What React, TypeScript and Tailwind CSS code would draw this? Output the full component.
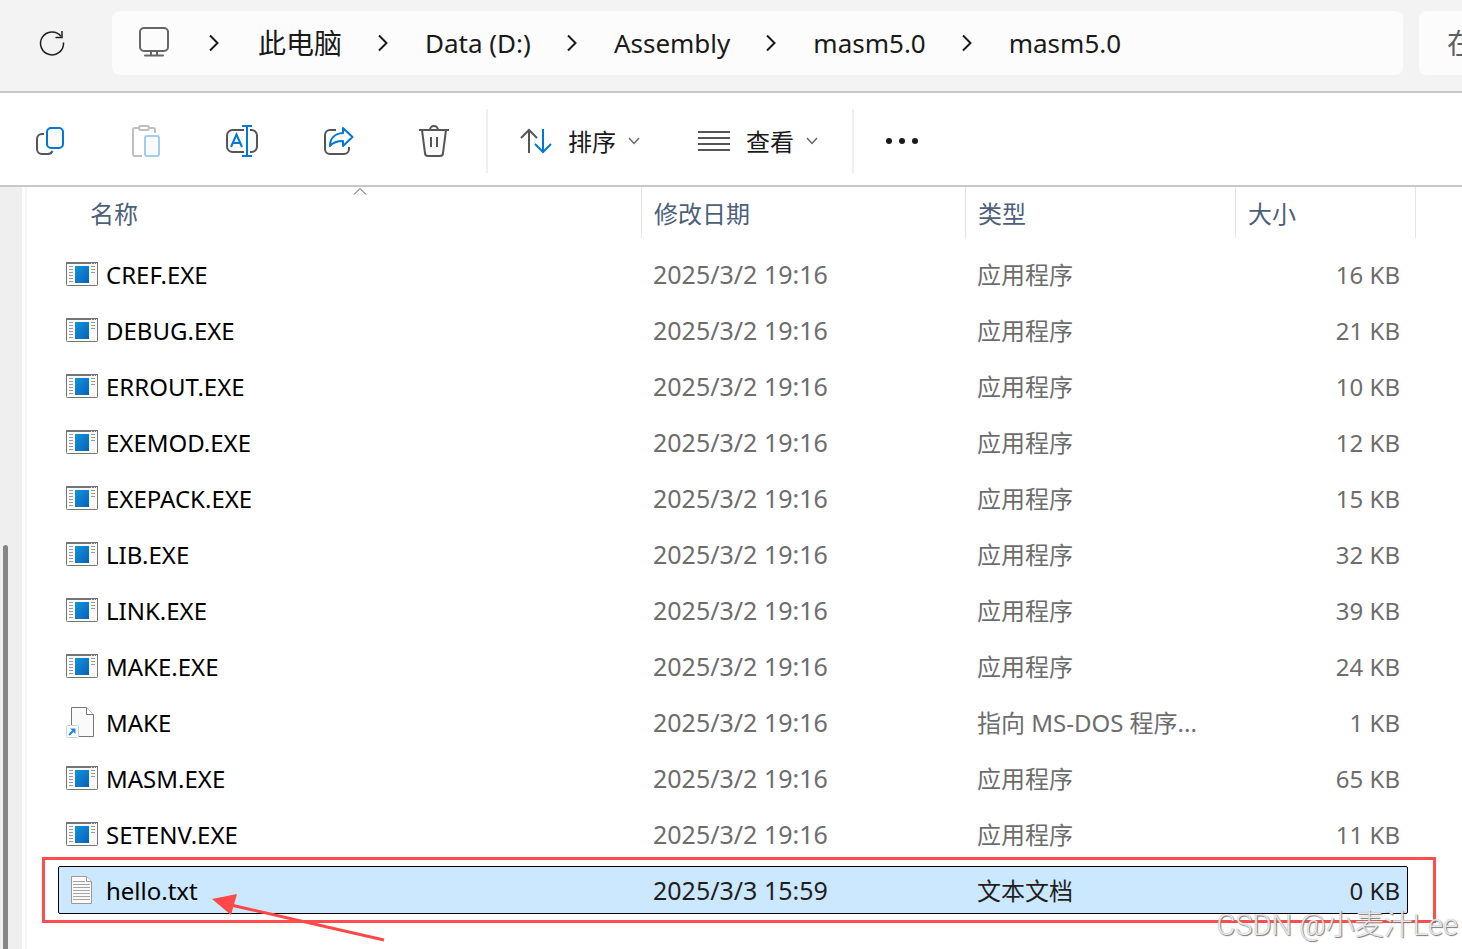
import type { ReactNode } from "react";

type FileKind = "exe" | "shortcut" | "text";

interface FileItem {
  name: string;
  date: string;
  type: string;
  size: string;
  kind: FileKind;
  selected?: boolean;
}

const files: FileItem[] = [
  { name: "CREF.EXE", date: "2025/3/2 19:16", type: "应用程序", size: "16 KB", kind: "exe" },
  { name: "DEBUG.EXE", date: "2025/3/2 19:16", type: "应用程序", size: "21 KB", kind: "exe" },
  { name: "ERROUT.EXE", date: "2025/3/2 19:16", type: "应用程序", size: "10 KB", kind: "exe" },
  { name: "EXEMOD.EXE", date: "2025/3/2 19:16", type: "应用程序", size: "12 KB", kind: "exe" },
  { name: "EXEPACK.EXE", date: "2025/3/2 19:16", type: "应用程序", size: "15 KB", kind: "exe" },
  { name: "LIB.EXE", date: "2025/3/2 19:16", type: "应用程序", size: "32 KB", kind: "exe" },
  { name: "LINK.EXE", date: "2025/3/2 19:16", type: "应用程序", size: "39 KB", kind: "exe" },
  { name: "MAKE.EXE", date: "2025/3/2 19:16", type: "应用程序", size: "24 KB", kind: "exe" },
  { name: "MAKE", date: "2025/3/2 19:16", type: "指向 MS-DOS 程序...", size: "1 KB", kind: "shortcut" },
  { name: "MASM.EXE", date: "2025/3/2 19:16", type: "应用程序", size: "65 KB", kind: "exe" },
  { name: "SETENV.EXE", date: "2025/3/2 19:16", type: "应用程序", size: "11 KB", kind: "exe" },
  { name: "hello.txt", date: "2025/3/3 15:59", type: "文本文档", size: "0 KB", kind: "text", selected: true },
];

const folders = ["Data (D:)", "Assembly", "masm5.0", "masm5.0"];

const App = () => {
  return (
    <main className="relative flex min-h-screen flex-col overflow-hidden bg-white font-['Noto_Sans','Noto_Sans_CJK_SC',sans-serif] text-[#1a1a1a]">
      <AddressBar />
      <Toolbar />
      <div className="flex flex-1">
        <div className="flex w-[22px] flex-col bg-[#efefef] pt-[358px] pl-[3px]">
          <div className="w-[5px] flex-1 rounded-t bg-[#868686]" />
        </div>
        <div className="ml-[3px] w-0.5 bg-[#f7f7f7]" />
        <FileTable />
      </div>
      <p className="absolute right-1 bottom-2 font-['Roboto','Noto_Sans_CJK_SC',sans-serif] text-[29px] leading-8 font-light text-white/80 [text-shadow:1px_1px_1px_#777,0_0_1px_#999]">
        CSDN @小麦汁Lee
      </p>
    </main>
  );
};

const AddressBar = () => (
  <header className="flex h-[93px] items-start border-b-2 border-[#c8c8c8] bg-[#f3f3f3] pt-[11px]">
    <button className="flex h-16 w-28 items-center pl-9" aria-label="刷新">
      <svg width="32" height="32" viewBox="0 0 32 32" fill="none" stroke="#1f1f1f" strokeWidth="1.5">
        <path d="M27.5 15.5A11.5 11.5 0 1 1 25 9.2" />
        <path d="M26 4V10.5H19.5" />
      </svg>
    </button>
    <nav className="mr-4 flex h-16 flex-1 items-center rounded-lg bg-[#fcfcfc] pl-[26px] text-[26px] leading-9">
      <svg width="32" height="32" viewBox="0 0 32 32" fill="none" stroke="#666" strokeWidth="2">
        <rect x="2" y="1" width="28" height="23" rx="4" />
        <path d="M13 24v4M19 24v4M7 28.5H25" strokeLinecap="round" />
      </svg>
      <Chevron first />
      <a href="#" className="text-[28px]">此电脑</a>
      {folders.map((folder, i) => (
        <span key={i} className="flex items-center">
          <Chevron />
          <a href="#">{folder}</a>
        </span>
      ))}
    </nav>
    <input
      aria-label="搜索"
      placeholder="在"
      className="h-16 w-[43px] rounded-l-lg bg-[#fcfcfc] pl-7 text-[28px] outline-none placeholder:text-[#5f5f5f]"
    />
  </header>
);

const Chevron = ({ first }: { first?: boolean }) => (
  <svg
    className={first ? "mr-[38px] ml-[38px]" : "mr-9 ml-[35px]"}
    width="12"
    height="18"
    viewBox="0 0 12 18"
    fill="none"
    stroke="#1a1a1a"
    strokeWidth="2"
  >
    <path d="M2 1.5L9.5 9L2 16.5" />
  </svg>
);

const Toolbar = () => (
  <div className="flex h-[94px] items-center border-b-2 border-[#c8c8c8] pt-1 pl-0.5">
    <IconButton label="复制">
      <path d="M10 9H8a5 5 0 0 0-5 5V24a5 5 0 0 0 5 5H14a5 5 0 0 0 4.5-3" stroke="#555" />
      <rect x="13" y="3" width="16" height="20" rx="4" fill="#fafafa" stroke="#0078d4" />
    </IconButton>
    <IconButton label="粘贴">
      <path d="M9 3H4.5A1.5 1.5 0 0 0 3 4.5V29.5A1.5 1.5 0 0 0 4.5 31H12M19 3H23.5A1.5 1.5 0 0 1 25 4.5V8" stroke="#c0c0c0" />
      <rect x="9" y="1" width="10" height="4" rx="2" stroke="#c0c0c0" />
      <rect x="15" y="11" width="14" height="20" rx="2" fill="#fafafa" stroke="#a3cdf0" />
    </IconButton>
    <IconButton label="重命名">
      <path d="M18 5H6.5A5.5 5.5 0 0 0 1 10.5V21.5A5.5 5.5 0 0 0 6.5 27H18" fill="#fafafa" stroke="#555" />
      <path d="M24 5H25.5A5.5 5.5 0 0 1 31 10.5V21.5A5.5 5.5 0 0 1 25.5 27H24" fill="#fafafa" stroke="#555" />
      <path d="M21 1V31M16 1H26M16 31H26M5 22L10.5 9.5L16 22M7 18H14" stroke="#0078d4" />
    </IconButton>
    <IconButton label="共享">
      <path d="M14 5H8a5 5 0 0 0-5 5V24a5 5 0 0 0 5 5H22a5 5 0 0 0 5-5V22" stroke="#555" />
      <path d="M21 3L30.5 12L21 21V16C15 16 11 17.5 8 21C8 13 13 8.5 21 8Z" fill="#fafafa" stroke="#0078d4" strokeLinejoin="round" />
    </IconButton>
    <IconButton label="删除">
      <path d="M4 5L7 28A3 3 0 0 0 10 31H22A3 3 0 0 0 25 28L28 5" fill="#fafafa" stroke="#555" />
      <path d="M1 5H31M12 5A4 4 0 0 1 20 5M13 12V22M19 12V22" stroke="#555" />
    </IconButton>
    <Divider />
    <MenuButton label="排序">
      <path d="M9 28V5M1 13L9 5L17 13" stroke="#555" />
      <path d="M23 4V27M15 19L23 27L31 19" stroke="#0078d4" />
    </MenuButton>
    <div className="ml-[26px] flex">
      <MenuButton label="查看">
        <path d="M0 7H32M0 13H32M0 19H32M0 25H32" stroke="#555" />
      </MenuButton>
    </div>
    <div className="ml-[30px] flex">
      <Divider />
    </div>
    <button className="ml-8" aria-label="更多">
      <svg width="32" height="32" viewBox="0 0 32 32" fill="#1a1a1a">
        <circle cx="3" cy="16" r="3" />
        <circle cx="16" cy="16" r="3" />
        <circle cx="29" cy="16" r="3" />
      </svg>
    </button>
  </div>
);

const IconButton = ({ label, children }: { label: string; children: ReactNode }) => (
  <button className="flex w-24 justify-center" aria-label={label}>
    <svg className="overflow-visible" width="32" height="32" viewBox="0 0 32 32" fill="none" strokeWidth="2">
      {children}
    </svg>
  </button>
);

const MenuButton = ({ label, children }: { label: string; children: ReactNode }) => (
  <button className="ml-8 flex items-center text-2xl">
    <svg className="mr-4" width="32" height="32" viewBox="0 0 32 32" fill="none" strokeWidth="2">
      {children}
    </svg>
    <span className="pt-0.5">{label}</span>
    <svg className="ml-3" width="12" height="8" viewBox="0 0 12 8" fill="none" stroke="#666" strokeWidth="1.5">
      <path d="M1 1L6 6.5L11 1" />
    </svg>
  </button>
);

const Divider = () => <div className="ml-1 h-16 w-0.5 bg-[#efefef]" />;

const FileTable = () => (
  <table className="ml-[31px] block flex-1 text-2xl leading-8 text-[#6d6d6d]">
    <thead className="block pr-[46px] text-[#4c607a]">
      <tr className="grid h-[51px] grid-cols-[1fr_324px_270px_180px]">
        <th className="relative flex items-center border-r border-[#e5e5e5] pt-0.5 pl-8 font-normal">
          名称
          <span className="absolute top-0 right-0 left-5 flex justify-center">
            <svg width="14" height="8" viewBox="0 0 14 8" fill="none" stroke="#555">
              <path d="M1 7.5L7 1.5L13 7.5" />
            </svg>
          </span>
        </th>
        <th className="flex items-center border-r border-[#e5e5e5] pt-0.5 pl-3 font-normal">修改日期</th>
        <th className="flex items-center border-r border-[#e5e5e5] pt-0.5 pl-3 font-normal">类型</th>
        <th className="flex items-center border-r border-[#e5e5e5] pt-0.5 pl-3 font-normal">大小</th>
      </tr>
    </thead>
    <tbody className="flex flex-col gap-2 pt-3 pr-[54px]">
      {files.map((file) => (
        <FileRow key={file.name} file={file} />
      ))}
    </tbody>
  </table>
);

const FileRow = ({ file }: { file: FileItem }) => (
  <tr
    className={`relative grid h-12 grid-cols-[1fr_324px_270px_172px] rounded-[2px] border ${
      file.selected ? "border-black bg-[#cce8ff] text-[#1f1f1f]" : "border-transparent"
    }`}
  >
    <td className="flex items-center gap-2 pl-[7px] text-black">
      <FileIcon kind={file.kind} />
      <span className="pt-0.5">{file.name}</span>
      {file.selected && <Highlight />}
    </td>
    <td className="flex items-center pl-3 text-[25px]">{file.date}</td>
    <td className="flex items-center pt-0.5 pl-3 whitespace-nowrap">{file.type}</td>
    <td className="flex items-center justify-end pt-0.5 pr-[7px]">{file.size}</td>
  </tr>
);

// red frame and arrow drawn over the selected file
const Highlight = () => (
  <>
    <span className="pointer-events-none absolute -top-[10px] -right-[29px] -bottom-[10px] -left-[17px] border-3 border-[#ff4d4d]" />
    <svg className="pointer-events-none absolute top-6 left-[152px]" width="176" height="52" viewBox="0 0 176 52">
      <path d="M20 14L173 49" stroke="#ff4848" strokeWidth="3" />
      <path d="M1 8L26 3L20 24Z" fill="#ff4848" />
    </svg>
  </>
);

const FileIcon = ({ kind }: { kind: FileKind }) => {
  if (kind === "exe") {
    return (
      <svg width="32" height="24" viewBox="0 0 32 24" fill="none">
        <defs>
          <linearGradient id="exeFill" x1="0" y1="0" x2="1" y2="1">
            <stop offset="0" stopColor="#1593e0" />
            <stop offset="1" stopColor="#0462b8" />
          </linearGradient>
        </defs>
        <rect x="0.5" y="0.5" width="31" height="23" rx="1" fill="#fafafa" stroke="#767676" />
        <path d="M0 1H32" stroke="#767676" strokeWidth="2" />
        <path d="M25 1.5h1M28 1.5h1M30 1.5h1" stroke="#ddd" />
        <path d="M3 4.5h4M3 7.5h4M3 10.5h4M3 13.5h4M3 16.5h4M3 19.5h4M25 4.5h4M25 7.5h4M25 10.5h4" stroke="#999" />
        <rect x="9" y="4" width="14" height="17" fill="url(#exeFill)" />
      </svg>
    );
  }
  if (kind === "shortcut") {
    return (
      <svg width="32" height="32" viewBox="0 0 32 32" fill="none">
        <path d="M5.5 1.5H20.5L27.5 8.5V30.5H5.5Z" fill="#fafafa" stroke="#767676" />
        <path d="M20.5 1.5V8.5H27.5" fill="#fff" stroke="#767676" />
        <rect x="0.5" y="19.5" width="12" height="12" rx="1" fill="#fff" stroke="#c5d3e6" />
        <path d="M3 29L8 24" stroke="#1c8ad8" strokeWidth="2" />
        <path d="M4 22.5H9.5V28Z" fill="#1c8ad8" />
      </svg>
    );
  }
  return (
    <svg width="32" height="32" viewBox="0 0 32 32" fill="none">
      <path d="M5.5 2.5H20.5L25.5 7.5V29.5H5.5Z" fill="#fafafa" stroke="#999" />
      <path d="M20.5 2.5V7.5H25.5" fill="#fff" stroke="#999" />
      <path d="M7 7.5H19M7 10.5H24M7 13.5H24M7 16.5H24M7 19.5H24M7 22.5H24M7 25.5H24" stroke="#a5a5a5" />
    </svg>
  );
};

export default App;
